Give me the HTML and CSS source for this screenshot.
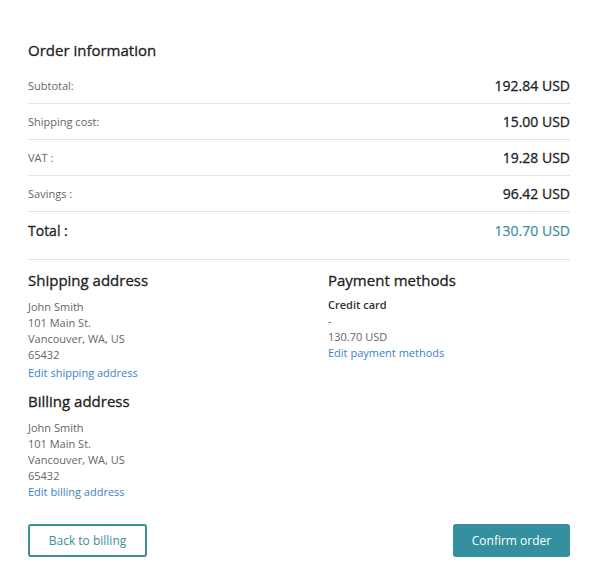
FILE: index.html
```html
<!DOCTYPE html>
<html lang="en">
<head>
    <meta charset="UTF-8">
    <meta name="viewport" content="width=device-width, initial-scale=1.0">
    <title>Order review</title>
    <link rel="stylesheet" href="styles.css">
</head>
<body>
    <div class="page">
        <!-- Order totals -->
        <h2 class="section-title">Order information</h2>
        <div class="summary">
            <div class="summary-row">
                <span class="label">Subtotal:</span>
                <span class="value">192.84 USD</span>
            </div>
            <div class="summary-row">
                <span class="label">Shipping cost:</span>
                <span class="value">15.00 USD</span>
            </div>
            <div class="summary-row">
                <span class="label">VAT :</span>
                <span class="value">19.28 USD</span>
            </div>
            <div class="summary-row">
                <span class="label">Savings :</span>
                <span class="value">96.42 USD</span>
            </div>
            <div class="summary-row total">
                <span class="label">Total :</span>
                <span class="value">130.70 USD</span>
            </div>
        </div>

        <!-- Addresses and payment -->
        <div class="details">
            <div class="details-col">
                <h3 class="block-title">Shipping address</h3>
                <p class="address">John Smith<br>101 Main St.<br>Vancouver, WA, US<br>65432</p>
                <a href="#" class="edit-link shipping-link">Edit shipping address</a>

                <h3 class="block-title billing-title">Billing address</h3>
                <p class="address">John Smith<br>101 Main St.<br>Vancouver, WA, US<br>65432</p>
                <a href="#" class="edit-link">Edit billing address</a>
            </div>
            <div class="details-col">
                <h3 class="block-title">Payment methods</h3>
                <p class="payment">
                    <strong>Credit card</strong><br>
                    -<br>
                    130.70 USD
                </p>
                <a href="#" class="edit-link">Edit payment methods</a>
            </div>
        </div>

        <div class="actions">
            <button class="btn btn-outline">Back to billing</button>
            <button class="btn btn-primary">Confirm order</button>
        </div>
    </div>
</body>
</html>
```

FILE: styles.css
```css
/* Page */
body {
    margin: 0;
    background: #fff;
    font-family: "Open Sans", Arial, sans-serif;
    color: #333;
}

.page {
    width: 542px;
    padding: 40px 0 0 28px;
}

/* Headings */
.section-title,
.block-title {
    margin: 0;
    font-size: 15px;
    line-height: 20px;
    font-weight: 400;
    color: #222;
    -webkit-text-stroke: 0.3px #222;
}

.section-title {
    margin-bottom: 8px;
}

/* Order summary */
.summary {
    border-bottom: 1px solid #e3e3e3;
    padding-bottom: 11px;
}

.summary-row {
    display: flex;
    justify-content: space-between;
    align-items: center;
    height: 35px;
    border-bottom: 1px solid #e3e3e3;
}

.summary-row .label {
    font-size: 11px;
    color: #666;
}

.summary-row .value {
    font-size: 14px;
    color: #222;
    -webkit-text-stroke: 0.3px #222;
}

.summary-row.total {
    height: 36px;
    border-bottom: none;
}

.summary-row.total .label {
    font-size: 14px;
    color: #222;
    -webkit-text-stroke: 0.3px #222;
}

.summary-row.total .value {
    color: #3a8e9e;
    -webkit-text-stroke: 0.2px #3a8e9e;
}

/* Addresses */
.details {
    display: grid;
    grid-template-columns: 300px 1fr;
    padding-top: 10px;
}

.address,
.payment {
    margin: 9px 0 0;
    font-size: 11px;
    line-height: 16px;
    color: #666;
}

.payment {
    margin-top: 7px;
}

.payment strong {
    font-weight: 600;
    color: #333;
}

.edit-link {
    display: block;
    font-size: 11px;
    line-height: 16px;
    color: #3c82c6;
    text-decoration: none;
}

.shipping-link {
    margin-top: 2px;
}

.billing-title {
    margin-top: 10px;
}

/* Buttons */
.actions {
    display: flex;
    justify-content: space-between;
    margin-top: 24px;
}

.btn {
    height: 33px;
    font-family: "Open Sans", Arial, sans-serif;
    font-size: 12px;
    border-radius: 3px;
    cursor: pointer;
}

.btn-outline {
    width: 119px;
    background: #fff;
    border: 2px solid #3a8e9e;
    color: #3a8e9e;
}

.btn-primary {
    width: 117px;
    background: #348f9f;
    border: none;
    color: #fff;
}
```
